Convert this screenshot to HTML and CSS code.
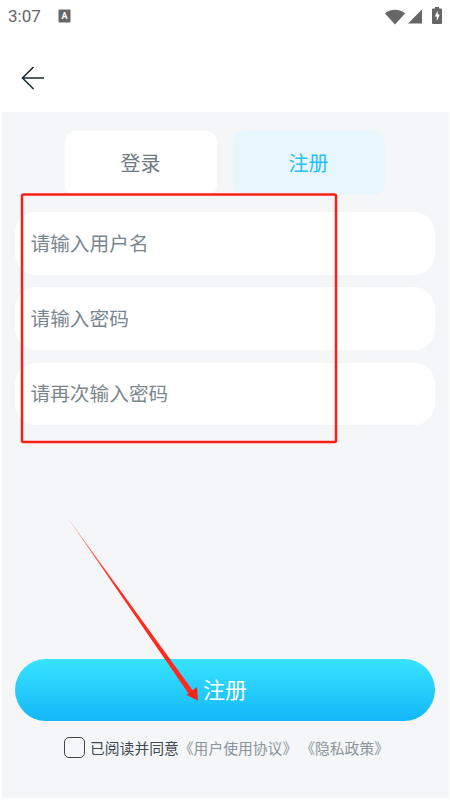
FILE: index.html
```html
<!DOCTYPE html>
<html lang="zh-CN">
<head>
<meta charset="utf-8">
<title>注册</title>
<link rel="stylesheet" href="styles.css">
</head>
<body>
<div class="screen">
  <header class="status-bar">
    <span class="time">3:07</span>
    <svg class="status-a" width="13" height="14" viewBox="0 0 13 14"><rect width="12" height="13" x="0.5" y="0.5" rx="1" fill="#666"/><text x="6.5" y="9.5" class="status-a-text">A</text></svg>
    <span class="status-spacer"></span>
    <svg class="wifi" width="20" height="16" viewBox="0 0 20 16"><path d="M0 4.5C2.5 2 6 .8 10 .8s7.500 1.200 10 3.700L10 15.500z" fill="#666"/></svg>
    <svg class="signal" width="15" height="15" viewBox="0 0 15 15"><path d="M14 0.500V14.500H0z" fill="#666"/></svg>
    <svg class="battery" width="10" height="17" viewBox="0 0 10 17"><path d="M3 0h4v1.500h2a1 1 0 0 1 1 1V16a1 1 0 0 1-1 1H1a1 1 0 0 1-1-1V2.500a1 1 0 0 1 1-1h2z" fill="#666"/><path d="M5.800 3.500L2.800 9.500h2v4.500l3-6.500h-2z" fill="#fff"/></svg>
  </header>
  <nav class="nav-bar">
    <svg width="24" height="24" viewBox="0 0 24 24"><path d="M12.500 1L1.500 12L12.500 23M1.500 12H23" fill="none" stroke="#1c2b33" stroke-width="1.600"/></svg>
  </nav>
  <main class="content">
    <div class="tabs">
      <div class="tab">登录</div>
      <div class="tab tab-active">注册</div>
    </div>
    <form class="fields">
      <div class="field">请输入用户名</div>
      <div class="field">请输入密码</div>
      <div class="field">请再次输入密码</div>
    </form>
    <div class="grow"></div>
    <div class="submit">注册</div>
    <div class="agree">
      <span class="checkbox"></span>
      <span class="agree-text">已阅读并同意</span>
      <span class="agree-link">《用户使用协议》</span>
      <span class="agree-link agree-link-last">《隐私政策》</span>
    </div>
  </main>
  <svg class="annotation" width="450" height="800" viewBox="0 0 450 800">
    <defs>
      <linearGradient id="arrowFade" gradientUnits="userSpaceOnUse" x1="68" y1="518" x2="190" y2="690">
        <stop offset="0" stop-color="#ff2a1f" stop-opacity="0.45"/>
        <stop offset="0.4" stop-color="#ff2a1f"/>
      </linearGradient>
    </defs>
    <rect x="22" y="194.500" width="314" height="247.500" rx="1.500" fill="none" stroke="#fb2016" stroke-width="2.500"/>
    <path d="M67.500 517.500L193.500 691.500L189.500 695z" fill="url(#arrowFade)"/>
    <path d="M198 700.500L197 687L186.500 695z" fill="#f4231a"/>
  </svg>
</div>
</body>
</html>
```
FILE: styles.css
```css
* { box-sizing: border-box; }
html, body { margin: 0; padding: 0; }
body {
  width: 450px;
  height: 800px;
  overflow: hidden;
  background: #fff;
  font-family: "Noto Sans CJK SC", "Noto Sans", sans-serif;
}
.screen {
  position: relative;
  width: 450px;
  height: 800px;
  display: flex;
  flex-direction: column;
}
.status-bar {
  height: 32px;
  padding: 0 8px 0 8px;
  display: flex;
  align-items: center;
  flex: none;
}
.time {
  font-family: Roboto, "Liberation Sans", sans-serif;
  font-size: 17px;
  color: #666;
  line-height: 1;
  margin-right: 17px;
}
.status-a-text {
  font-family: Roboto, "Liberation Sans", sans-serif;
  font-size: 9px;
  font-weight: 700;
  fill: #fff;
  text-anchor: middle;
}
.status-spacer { flex: 1; }
.wifi { margin-right: 3px; margin-top: 1px; }
.signal { margin-right: 9px; margin-top: 1px; }
.battery { margin-right: 0; margin-top: -1px; }
.nav-bar {
  height: 80px;
  flex: none;
  padding: 12px 0 0 21px;
  display: flex;
  align-items: center;
}
.content {
  flex: 1;
  margin: 0 1px 2px 2px;
  padding: 19px 14px 0 13px;
  background: #f4f6f8;
  display: flex;
  flex-direction: column;
}
.tabs {
  display: flex;
  justify-content: center;
  gap: 16px;
  padding-right: 1px;
  height: 65.300px;
  flex: none;
}
.tab {
  width: 152px;
  height: 64px;
  border-radius: 10px;
  background: #fff;
  color: #6d7b82;
  font-size: 20px;
  display: flex;
  align-items: center;
  justify-content: center;
  padding-bottom: 2px;
}
.tab-active {
  background: #e8f7fe;
  color: #27bff5;
}
.fields {
  margin-top: 16px;
  display: flex;
  flex-direction: column;
  gap: 12.800px;
  flex: none;
}
.field {
  height: 62.400px;
  border-radius: 21px;
  background: #fff;
  color: #7b878e;
  font-size: 19.700px;
  display: flex;
  align-items: center;
  padding-left: 15.500px;
  padding-bottom: 2px;
}
.grow { flex: 1; }
.submit {
  height: 62px;
  flex: none;
  border-radius: 31px;
  background: linear-gradient(180deg, #38e3ff 0%, #14b7f7 100%);
  color: #fff;
  font-size: 22px;
  display: flex;
  align-items: center;
  justify-content: center;
  padding-bottom: 4px;
}
.agree {
  height: 77px;
  flex: none;
  padding: 16px 0 0 49px;
  display: flex;
  align-items: flex-start;
  font-size: 14.800px;
  line-height: 22px;
  white-space: nowrap;
}
.checkbox {
  width: 21px;
  height: 21px;
  border: 1.500px solid #444;
  border-radius: 5px;
  margin-right: 5px;
  flex: none;
}
.agree-text { color: #3f4a50; }
.agree-link { color: #8a959b; }
.agree-link-last { margin-left: 3px; }
.annotation {
  position: absolute;
  left: 0;
  top: 0;
  pointer-events: none;
}
```
